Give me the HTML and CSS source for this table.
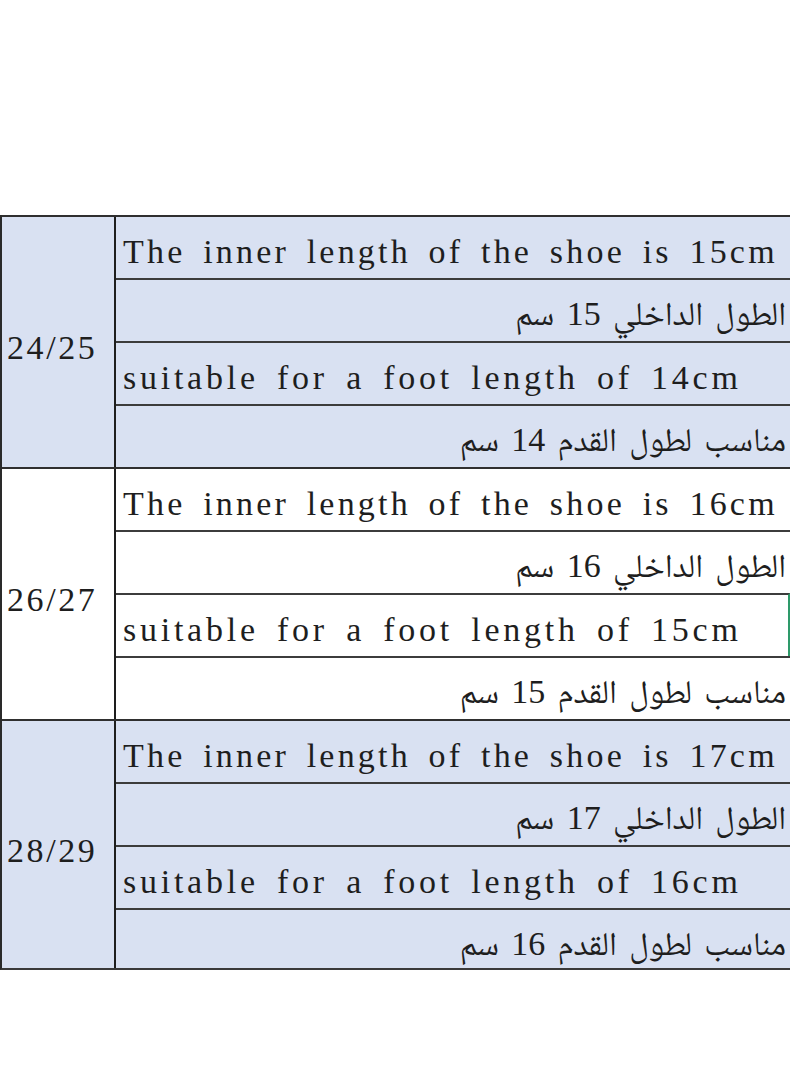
FILE: index.html
```html
<!DOCTYPE html>
<html lang="en">
<head>
<meta charset="utf-8">
<link rel="stylesheet" href="styles.css">
</head>
<body>
<div class="page">
  <div class="sheet">
    <div class="group blue">
      <div class="size">24/25</div>
      <div class="cell en">The inner length of the shoe is 15cm</div>
      <div class="cell ar" dir="rtl">الطول الداخلي <span class="num">15</span> سم</div>
      <div class="cell en fit">suitable for a foot length of 14cm</div>
      <div class="cell ar" dir="rtl">مناسب لطول القدم <span class="num">14</span> سم</div>
    </div>
    <div class="group white">
      <div class="size">26/27</div>
      <div class="cell en">The inner length of the shoe is 16cm</div>
      <div class="cell ar" dir="rtl">الطول الداخلي <span class="num">16</span> سم</div>
      <div class="cell en fit edge">suitable for a foot length of 15cm</div>
      <div class="cell ar" dir="rtl">مناسب لطول القدم <span class="num">15</span> سم</div>
    </div>
    <div class="group blue last">
      <div class="size">28/29</div>
      <div class="cell en">The inner length of the shoe is 17cm</div>
      <div class="cell ar" dir="rtl">الطول الداخلي <span class="num">17</span> سم</div>
      <div class="cell en fit">suitable for a foot length of 16cm</div>
      <div class="cell ar" dir="rtl">مناسب لطول القدم <span class="num">16</span> سم</div>
    </div>
  </div>
</div>
</body>
</html>
```

FILE: styles.css
```css
html, body {
  margin: 0;
  padding: 0;
  background: #ffffff;
}

.page {
  width: 790px;
  height: 1077px;
  padding-top: 215px;
  box-sizing: border-box;
  font-family: "Liberation Serif", "DejaVu Sans", serif;
  color: #1e1e1e;
}

.sheet {
  width: 790px;
  border-left: 2px solid #2a2a2a;
  border-bottom: 2px solid #3a3a3a;
  box-sizing: border-box;
}

.group {
  display: grid;
  grid-template-columns: 114px 1fr;
  grid-template-rows: 61px 63px 63px 63px;
  border-top: 2px solid #2f2f2f;
}

.group.last {
  grid-template-rows: 61px 63px 63px 60px;
}

.blue {
  background: #d9e1f2;
}

.white {
  background: #ffffff;
}

.size {
  grid-row: 1 / span 4;
  grid-column: 1;
  border-right: 2px solid #1e1e1e;
  display: flex;
  align-items: center;
  padding: 12px 0 0 5px;
  font-size: 34px;
  letter-spacing: 2.6px;
}

.cell {
  grid-column: 2;
  display: flex;
  align-items: flex-end;
  padding-bottom: 7px;
  font-size: 34px;
  white-space: nowrap;
  border-top: 2px solid #3c3c3c;
}

.cell:nth-child(2) {
  border-top: none;
}

.en {
  padding-left: 7px;
  letter-spacing: 3.2px;
  word-spacing: 6px;
}

.en.fit {
  letter-spacing: 3.75px;
}

.ar {
  display: block;
  padding-top: 12px;
  padding-right: 4px;
  box-sizing: border-box;
  font-family: "Noto Naskh Arabic", "Noto Sans Arabic", "DejaVu Sans", serif;
  font-size: 33px;
  line-height: 44px;
  word-spacing: 5px;
  text-align: right;
}

.num {
  font-family: "Liberation Serif", serif;
  font-size: 34px;
}

.edge {
  border-right: 2px solid #2e9a6a;
}
```
